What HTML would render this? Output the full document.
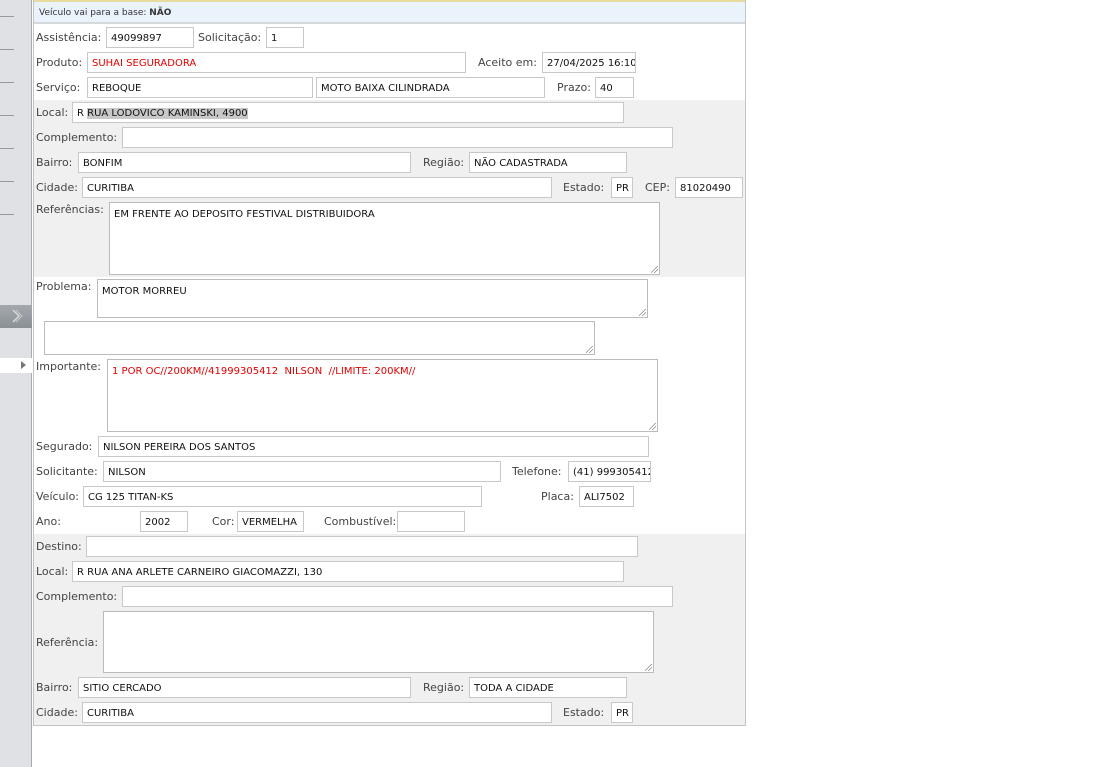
<!DOCTYPE html>
<html><head><meta charset="utf-8"><style>
*{box-sizing:border-box;margin:0;padding:0}
body{width:1110px;height:767px;background:#fff;position:relative;overflow:hidden;font-family:"DejaVu Sans",Verdana,sans-serif;font-size:11px;color:#333}
.a{position:absolute}
.l{position:absolute;font-size:11px;color:#444;line-height:14px;white-space:nowrap}
.i{position:absolute;height:21px;border:1px solid #c8c8c8;background:#fff;font-size:10px;color:#111;padding:5px 0 0 4px;white-space:nowrap;overflow:hidden;line-height:12px}
.t{position:absolute;border:1px solid #bbb;background:#fff;font-size:10px;color:#111;padding:6px 0 0 4px;line-height:12px}
.t:after{content:"";position:absolute;right:1px;bottom:1px;width:7px;height:7px;background:linear-gradient(135deg,transparent 45%,#888 45%,#888 52%,transparent 52%,transparent 70%,#888 70%,#888 77%,transparent 77%)}
.r{color:#e00000}
.sl{position:absolute;left:0;width:14px;height:1px;background:#999}
</style></head><body>
<div class="a" style="left:0;top:0;width:32px;height:767px;background:#dfe1e4;border-right:1px solid #a8acb0"></div>
<div class="sl" style="top:16px"></div><div class="sl" style="top:49px"></div><div class="sl" style="top:82px"></div><div class="sl" style="top:115px"></div><div class="sl" style="top:148px"></div><div class="sl" style="top:181px"></div><div class="sl" style="top:214px"></div>
<div class="a" style="left:0;top:305px;width:32px;height:23px;background:linear-gradient(#a4a9ae,#8a9096)"></div>
<svg class="a" style="left:11px;top:309px" width="12" height="14" viewBox="0 0 12 14"><path d="M2 1l6 6-6 6" fill="none" stroke="#d8dadc" stroke-width="1.5"/><path d="M5 1l6 6-6 6" fill="none" stroke="#c8cacc" stroke-width="1"/></svg>
<div class="a" style="left:0;top:358px;width:32px;height:15px;background:#fff"></div>
<div class="a" style="left:21px;top:361px;width:0;height:0;border-left:5px solid #777;border-top:4px solid transparent;border-bottom:4px solid transparent"></div>

<div class="a" style="left:33px;top:0;width:713px;height:726px;border:1px solid #c4c4c4;border-top:none;background:#fff"></div>
<div class="a" style="left:34px;top:0;width:711px;height:24px;background:#eaf3fc;border-top:2px solid #e8dc9c;border-bottom:2px solid #d6d9dc"></div>
<div class="l" style="left:39px;top:6px;font-size:9px;color:#333">Veículo vai para a base: <b>NÃO</b></div>
<div class="a" style="left:34px;top:100px;width:711px;height:177px;background:#f0f0f0"></div>
<div class="a" style="left:34px;top:534px;width:711px;height:191px;background:#f0f0f0"></div>

<div class="l" style="left:36px;top:31px">Assistência:</div><div class="i" style="left:106px;top:27px;width:88px">49099897</div>
<div class="l" style="left:198px;top:31px">Solicitação:</div><div class="i" style="left:266px;top:27px;width:38px">1</div>
<div class="l" style="left:36px;top:56px">Produto:</div><div class="i r" style="left:87px;top:52px;width:379px;color:#e00000">SUHAI SEGURADORA</div>
<div class="l" style="left:478px;top:56px">Aceito em:</div><div class="i" style="left:542px;top:52px;width:94px">27/04/2025 16:10</div>
<div class="l" style="left:36px;top:81px">Serviço:</div><div class="i" style="left:87px;top:77px;width:226px">REBOQUE</div>
<div class="i" style="left:316px;top:77px;width:229px">MOTO BAIXA CILINDRADA</div>
<div class="l" style="left:557px;top:81px">Prazo:</div><div class="i" style="left:595px;top:77px;width:39px">40</div>
<div class="l" style="left:36px;top:106px">Local:</div><div class="i" style="left:72px;top:102px;width:552px">R <span style="background:#c8c8c8">RUA LODOVICO KAMINSKI, 4900</span></div>
<div class="l" style="left:36px;top:131px">Complemento:</div><div class="i" style="left:122px;top:127px;width:551px"></div>
<div class="l" style="left:36px;top:156px">Bairro:</div><div class="i" style="left:78px;top:152px;width:333px">BONFIM</div>
<div class="l" style="left:423px;top:156px">Região:</div><div class="i" style="left:469px;top:152px;width:158px">NÃO CADASTRADA</div>
<div class="l" style="left:36px;top:181px">Cidade:</div><div class="i" style="left:82px;top:177px;width:470px">CURITIBA</div>
<div class="l" style="left:563px;top:181px">Estado:</div><div class="i" style="left:611px;top:177px;width:22px">PR</div>
<div class="l" style="left:645px;top:181px">CEP:</div><div class="i" style="left:675px;top:177px;width:68px">81020490</div>
<div class="l" style="left:36px;top:203px">Referências:</div><div class="t" style="left:109px;top:202px;width:551px;height:73px">EM FRENTE AO DEPOSITO FESTIVAL DISTRIBUIDORA</div>
<div class="l" style="left:36px;top:280px">Problema:</div><div class="t" style="left:97px;top:279px;width:551px;height:39px">MOTOR MORREU</div>
<div class="t" style="left:44px;top:321px;width:551px;height:34px"></div>
<div class="l" style="left:36px;top:360px">Importante:</div><div class="t r" style="left:107px;top:359px;width:551px;height:73px;color:#e00000">1 POR OC//200KM//41999305412&nbsp; NILSON&nbsp; //LIMITE: 200KM//</div>
<div class="l" style="left:36px;top:440px">Segurado:</div><div class="i" style="left:98px;top:436px;width:551px">NILSON PEREIRA DOS SANTOS</div>
<div class="l" style="left:36px;top:465px">Solicitante:</div><div class="i" style="left:103px;top:461px;width:398px">NILSON</div>
<div class="l" style="left:512px;top:465px">Telefone:</div><div class="i" style="left:568px;top:461px;width:83px">(41) 999305412</div>
<div class="l" style="left:36px;top:490px">Veículo:</div><div class="i" style="left:83px;top:486px;width:399px">CG 125 TITAN-KS</div>
<div class="l" style="left:541px;top:490px">Placa:</div><div class="i" style="left:579px;top:486px;width:55px">ALI7502</div>
<div class="l" style="left:36px;top:515px">Ano:</div><div class="i" style="left:140px;top:511px;width:48px">2002</div>
<div class="l" style="left:212px;top:515px">Cor:</div><div class="i" style="left:237px;top:511px;width:67px">VERMELHA</div>
<div class="l" style="left:324px;top:515px">Combustível:</div><div class="i" style="left:397px;top:511px;width:68px"></div>
<div class="l" style="left:36px;top:540px">Destino:</div><div class="i" style="left:86px;top:536px;width:552px"></div>
<div class="l" style="left:36px;top:565px">Local:</div><div class="i" style="left:72px;top:561px;width:552px">R RUA ANA ARLETE CARNEIRO GIACOMAZZI, 130</div>
<div class="l" style="left:36px;top:590px">Complemento:</div><div class="i" style="left:122px;top:586px;width:551px"></div>
<div class="l" style="left:36px;top:636px">Referência:</div><div class="t" style="left:103px;top:611px;width:551px;height:62px"></div>
<div class="l" style="left:36px;top:681px">Bairro:</div><div class="i" style="left:78px;top:677px;width:333px">SITIO CERCADO</div>
<div class="l" style="left:423px;top:681px">Região:</div><div class="i" style="left:469px;top:677px;width:158px">TODA A CIDADE</div>
<div class="l" style="left:36px;top:706px">Cidade:</div><div class="i" style="left:82px;top:702px;width:470px">CURITIBA</div>
<div class="l" style="left:563px;top:706px">Estado:</div><div class="i" style="left:611px;top:702px;width:22px">PR</div>
</body></html>
